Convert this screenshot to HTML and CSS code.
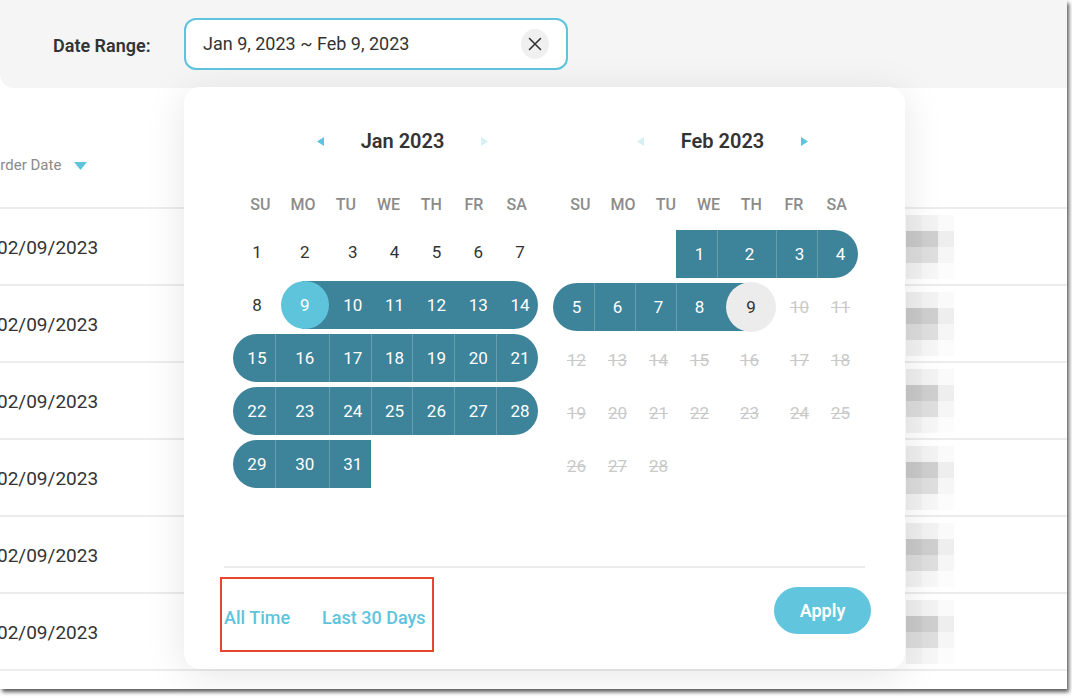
FILE: index.html
```html
<!DOCTYPE html>
<html lang="en">
<head>
<meta charset="utf-8">
<title>Date Range</title>
<link rel="stylesheet" href="styles.css">
</head>
<body>
<div class="window">
  <header class="topbar">
    <span class="label">Date Range:</span>
    <div class="range-input">
      <span class="range-text">Jan 9, 2023 ~ Feb 9, 2023</span>
      <button class="clear" aria-label="Clear">
        <svg width="14" height="14" viewBox="0 0 14 14"><path d="M1.5 1.5 L12.5 12.5 M12.5 1.5 L1.5 12.5" stroke="#333" stroke-width="1.6" fill="none" stroke-linecap="round"/></svg>
      </button>
    </div>
  </header>

  <div class="table">
    <div class="thead"><span class="th">Order Date</span><svg class="sort" width="13" height="8" viewBox="0 0 13 8"><polygon points="0,0 13,0 6.5,8" fill="#5ec4dc"/></svg></div>
    <div class="row"><span class="date">02/09/2023</span><div class="blur"><i class="c1"></i><i class="c2"></i><i class="c3"></i><i class="c4"></i><i class="c5"></i><i class="c6"></i><i class="c7"></i><i class="c8"></i><i class="c9"></i><i class="c10"></i><i class="c11"></i><i class="c12"></i></div></div>
    <div class="row"><span class="date">02/09/2023</span><div class="blur"><i class="c1"></i><i class="c2"></i><i class="c3"></i><i class="c4"></i><i class="c5"></i><i class="c6"></i><i class="c7"></i><i class="c8"></i><i class="c9"></i><i class="c10"></i><i class="c11"></i><i class="c12"></i></div></div>
    <div class="row"><span class="date">02/09/2023</span><div class="blur"><i class="c1"></i><i class="c2"></i><i class="c3"></i><i class="c4"></i><i class="c5"></i><i class="c6"></i><i class="c7"></i><i class="c8"></i><i class="c9"></i><i class="c10"></i><i class="c11"></i><i class="c12"></i></div></div>
    <div class="row"><span class="date">02/09/2023</span><div class="blur"><i class="c1"></i><i class="c2"></i><i class="c3"></i><i class="c4"></i><i class="c5"></i><i class="c6"></i><i class="c7"></i><i class="c8"></i><i class="c9"></i><i class="c10"></i><i class="c11"></i><i class="c12"></i></div></div>
    <div class="row"><span class="date">02/09/2023</span><div class="blur"><i class="c1"></i><i class="c2"></i><i class="c3"></i><i class="c4"></i><i class="c5"></i><i class="c6"></i><i class="c7"></i><i class="c8"></i><i class="c9"></i><i class="c10"></i><i class="c11"></i><i class="c12"></i></div></div>
    <div class="row"><span class="date">02/09/2023</span><div class="blur"><i class="c1"></i><i class="c2"></i><i class="c3"></i><i class="c4"></i><i class="c5"></i><i class="c6"></i><i class="c7"></i><i class="c8"></i><i class="c9"></i><i class="c10"></i><i class="c11"></i><i class="c12"></i></div></div>
  </div>

  <div class="picker">
    <div class="months">
      <section class="month">
        <div class="month-head">
          <svg class="arrow" width="7" height="9" viewBox="0 0 7 9"><polygon points="7,0 7,9 0,4.5" fill="#5ec4dc"/></svg>
          <span class="title">Jan 2023</span>
          <svg class="arrow" width="7" height="9" viewBox="0 0 7 9"><polygon points="0,0 0,9 7,4.5" fill="#d6eff5"/></svg>
        </div>
        <div class="weekdays"><span>SU</span><span>MO</span><span>TU</span><span>WE</span><span>TH</span><span>FR</span><span>SA</span></div>
        <div class="days">
          <div class="d"><span>1</span></div><div class="d"><span>2</span></div><div class="d"><span>3</span></div><div class="d"><span>4</span></div><div class="d"><span>5</span></div><div class="d"><span>6</span></div><div class="d"><span>7</span></div>
          <div class="d"><span>8</span></div><div class="d start"><span>9</span></div><div class="d in"><span>10</span></div><div class="d in"><span>11</span></div><div class="d in"><span>12</span></div><div class="d in"><span>13</span></div><div class="d in r"><span>14</span></div>
          <div class="d in l"><span>15</span></div><div class="d in sep"><span>16</span></div><div class="d in sep"><span>17</span></div><div class="d in sep"><span>18</span></div><div class="d in sep"><span>19</span></div><div class="d in sep"><span>20</span></div><div class="d in sep r"><span>21</span></div>
          <div class="d in l"><span>22</span></div><div class="d in sep"><span>23</span></div><div class="d in sep"><span>24</span></div><div class="d in sep"><span>25</span></div><div class="d in sep"><span>26</span></div><div class="d in sep"><span>27</span></div><div class="d in sep r"><span>28</span></div>
          <div class="d in l"><span>29</span></div><div class="d in sep"><span>30</span></div><div class="d in sep"><span>31</span></div>
        </div>
      </section>
      <section class="month">
        <div class="month-head">
          <svg class="arrow" width="7" height="9" viewBox="0 0 7 9"><polygon points="7,0 7,9 0,4.5" fill="#d6eff5"/></svg>
          <span class="title">Feb 2023</span>
          <svg class="arrow" width="7" height="9" viewBox="0 0 7 9"><polygon points="0,0 0,9 7,4.5" fill="#5ec4dc"/></svg>
        </div>
        <div class="weekdays"><span>SU</span><span>MO</span><span>TU</span><span>WE</span><span>TH</span><span>FR</span><span>SA</span></div>
        <div class="days feb">
          <div class="d"></div><div class="d"></div><div class="d"></div><div class="d in"><span>1</span></div><div class="d in sep"><span>2</span></div><div class="d in sep"><span>3</span></div><div class="d in sep r"><span>4</span></div>
          <div class="d in l"><span>5</span></div><div class="d in sep"><span>6</span></div><div class="d in sep"><span>7</span></div><div class="d in sep"><span>8</span></div><div class="d end"><span>9</span></div><div class="d off"><span>10</span></div><div class="d off"><span>11</span></div>
          <div class="d off"><span>12</span></div><div class="d off"><span>13</span></div><div class="d off"><span>14</span></div><div class="d off"><span>15</span></div><div class="d off"><span>16</span></div><div class="d off"><span>17</span></div><div class="d off"><span>18</span></div>
          <div class="d off"><span>19</span></div><div class="d off"><span>20</span></div><div class="d off"><span>21</span></div><div class="d off"><span>22</span></div><div class="d off"><span>23</span></div><div class="d off"><span>24</span></div><div class="d off"><span>25</span></div>
          <div class="d off"><span>26</span></div><div class="d off"><span>27</span></div><div class="d off"><span>28</span></div>
        </div>
      </section>
    </div>
    <div class="divider"></div>
    <footer class="picker-foot">
      <div class="presets">
        <button class="preset">All Time</button>
        <button class="preset">Last 30 Days</button>
      </div>
      <button class="apply">Apply</button>
    </footer>
  </div>
</div>
</body>
</html>
```

FILE: styles.css
```css
* { box-sizing: border-box; }

html, body {
  margin: 0;
  padding: 0;
  background: #ffffff;
}

body {
  font-family: "Roboto", "Liberation Sans", sans-serif;
  color: #333333;
  width: 1072px;
  height: 698px;
  overflow: hidden;
}

.window {
  position: relative;
  width: 1067px;
  height: 689px;
  background: #ffffff;
  overflow: hidden;
  box-shadow: 2px 3px 4px rgba(0, 0, 0, 0.65);
}

/* top bar */
.topbar {
  height: 88px;
  background: #f5f5f5;
  border-bottom-left-radius: 14px;
  display: flex;
  align-items: center;
  padding-left: 53px;
  gap: 32px;
}

.label {
  width: 99px;
  white-space: nowrap;
  font-size: 18px;
  font-weight: 600;
  color: #333333;
  margin-top: 2px;
}

.range-input {
  width: 384px;
  height: 52px;
  margin-top: -1px;
  background: #ffffff;
  border: 2px solid #5ec4dc;
  border-radius: 12px;
  display: flex;
  align-items: center;
  justify-content: space-between;
  padding: 0 17px 0 17px;
}

.range-text {
  font-size: 18px;
  color: #333333;
}

.clear {
  width: 28px;
  height: 30px;
  border-radius: 50%;
  border: none;
  background: #f0f0f0;
  display: flex;
  align-items: center;
  justify-content: center;
  padding: 0;
}

/* table underneath */
.table {
  width: 100%;
}

.thead {
  height: 121px;
  border-bottom: 2px solid #ececec;
  display: flex;
  align-items: flex-end;
  padding-bottom: 32px;
  gap: 13px;
}

.th {
  font-size: 15px;
  color: #8a8a8a;
  margin-left: -10px;
  line-height: 20px;
}

.sort {
  margin-bottom: 5px;
}

.row {
  height: 77px;
  border-bottom: 2px solid #ececec;
  display: grid;
  grid-template-columns: 906px 87px 1fr;
  align-items: center;
}

.date {
  font-size: 19px;
  color: #333333;
  margin-left: -3px;
  margin-top: 1px;
}

.blur {
  display: grid;
  grid-template-columns: repeat(3, 16px);
  grid-auto-rows: 16px;
}

.blur i { display: block; }
.blur .c1 { background: #efefef; }
.blur .c2 { background: #f3f3f3; }
.blur .c3 { background: #fafafa; }
.blur .c4 { background: #c9c9c9; }
.blur .c5 { background: #cfcfcf; }
.blur .c6 { background: #eeeeee; }
.blur .c7 { background: #dcdcdc; }
.blur .c8 { background: #dfdfdf; }
.blur .c9 { background: #f6f6f6; }
.blur .c10 { background: #f2f2f2; }
.blur .c11 { background: #f7f7f7; }
.blur .c12 { background: #fcfcfc; }

/* date picker popover */
.picker {
  position: absolute;
  left: 184px;
  top: 87px;
  width: 721px;
  height: 582px;
  background: #ffffff;
  border-radius: 16px;
  box-shadow: 0 6px 40px rgba(0, 0, 0, 0.10);
  display: flex;
  flex-direction: column;
}

.months {
  display: flex;
  gap: 15px;
  padding: 38px 47px 0 49px;
}

.month {
  width: 305px;
}

.month-head {
  height: 32px;
  display: flex;
  align-items: center;
  justify-content: center;
  gap: 37px;
  padding-left: 34px;
}

.title {
  font-size: 20px;
  font-weight: 600;
  color: #333333;
}

.weekdays {
  margin-top: 24px;
  height: 46px;
  display: grid;
  grid-template-columns: repeat(7, 1fr);
  align-items: center;
  text-align: center;
  font-size: 16px;
  font-weight: 500;
  color: #8c8c8c;
  padding-left: 6px;
}

.days {
  margin-top: 1px;
  display: grid;
  grid-template-columns: repeat(7, 1fr);
  grid-auto-rows: 48px;
  row-gap: 5px;
}

.days.feb {
  margin-top: 3px;
}

.d {
  display: flex;
  align-items: center;
  justify-content: center;
  font-size: 17px;
  color: #333333;
  padding-left: 6px;
}

.d.in {
  background: #3d8399;
  color: #ffffff;
}

.d.sep {
  box-shadow: inset 1px 0 0 rgba(255, 255, 255, 0.22);
}

.d.l {
  border-top-left-radius: 24px;
  border-bottom-left-radius: 24px;
}

.d.r {
  border-top-right-radius: 24px;
  border-bottom-right-radius: 24px;
}

.d.start {
  background: linear-gradient(to right, transparent 50%, #3d8399 50%);
  color: #ffffff;
}

.d.start span {
  flex-shrink: 0;
  width: 48px;
  height: 48px;
  border-radius: 50%;
  background: #5ec4dc;
  display: flex;
  align-items: center;
  justify-content: center;
}

.d.end {
  background: linear-gradient(to right, #3d8399 50%, transparent 50%);
  color: #333333;
}

.d.end span {
  flex-shrink: 0;
  width: 50px;
  height: 50px;
  border-radius: 50%;
  background: #ececec;
  display: flex;
  align-items: center;
  justify-content: center;
  margin-left: 3px;
}

.d.off {
  color: #c9c9c9;
  text-decoration: line-through;
}

.divider {
  margin: auto 40px 0 40px;
  height: 2px;
  background: #ebebeb;
}

.picker-foot {
  display: flex;
  justify-content: space-between;
  align-items: flex-start;
  padding: 9px 34px 17px 36px;
}

.presets {
  height: 75px;
  border: 2px solid #e5462d;
  display: flex;
  align-items: center;
  gap: 32px;
  padding: 5px 6px 0 2px;
}

.preset {
  border: none;
  background: none;
  padding: 0;
  font-family: inherit;
  font-size: 18px;
  font-weight: 500;
  color: #5ec4dc;
}

.apply {
  margin-top: 10px;
  width: 97px;
  height: 47px;
  border: none;
  border-radius: 24px;
  background: #62c5de;
  color: #ffffff;
  font-family: inherit;
  font-size: 18px;
  font-weight: 600;
  padding: 0;
}
```
